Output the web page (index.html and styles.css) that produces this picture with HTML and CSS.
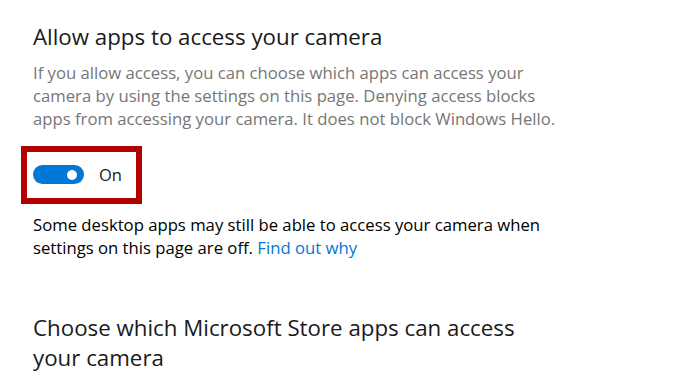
FILE: index.html
```html
<!DOCTYPE html>
<html lang="en">
<head>
    <meta charset="UTF-8">
    <meta name="viewport" content="width=device-width, initial-scale=1.0">
    <title>Camera privacy</title>
    <link rel="stylesheet" href="styles.css">
</head>
<body>
    <div class="ajustes">
        <h2 class="titulo">Allow apps to access your camera</h2>
        <p class="descripcion">If you allow access, you can choose which apps can access your camera by using the settings on this page. Denying access blocks apps from accessing your camera. It does not block Windows Hello.</p>

        <div class="marcado">
            <span class="interruptor"><span class="perilla"></span></span>
            <span class="estado">On</span>
        </div>

        <p class="aviso">Some desktop apps may still be able to access your camera when settings on this page are off. <a href="#">Find out why</a></p>

        <h2 class="titulo titulo-segundo">Choose which Microsoft Store apps can access your camera</h2>
    </div>
</body>
</html>
```

FILE: styles.css
```css
body {
    margin: 0;
    background: #fff;
    font-family: "Open Sans", "Noto Sans", sans-serif;
    color: #000;
}

.ajustes {
    padding: 22px 0 0 33px;
    width: 524px;
}

.titulo {
    font-size: 22.3px;
    font-weight: 400;
    line-height: 30px;
    margin: 0;
    color: #1a1a1a;
}

.descripcion {
    font-size: 16.7px;
    line-height: 23px;
    color: #767676;
    margin: 9px 0 0;
}

.marcado {
    display: inline-flex;
    align-items: center;
    gap: 15px;
    margin: 16px 0 0 -12px;
    padding: 0 14px 0 6px;
    height: 58px;
    box-sizing: border-box;
    border: 6px solid #b00000;
}

.interruptor {
    display: flex;
    align-items: center;
    justify-content: flex-end;
    width: 51px;
    height: 19px;
    border-radius: 10px;
    background: #0078d7;
    padding: 0 7px;
    box-sizing: border-box;
    margin-top: -1px;
}

.perilla {
    width: 10px;
    height: 10px;
    border-radius: 50%;
    background: #fff;
}

.estado {
    font-size: 16.5px;
    line-height: 20px;
    color: #1a1a1a;
}

.aviso {
    font-size: 16.7px;
    line-height: 23px;
    margin: 9px 0 0;
}

.aviso a {
    color: #0078d7;
    text-decoration: none;
}

.titulo-segundo {
    margin-top: 54px;
}
```
